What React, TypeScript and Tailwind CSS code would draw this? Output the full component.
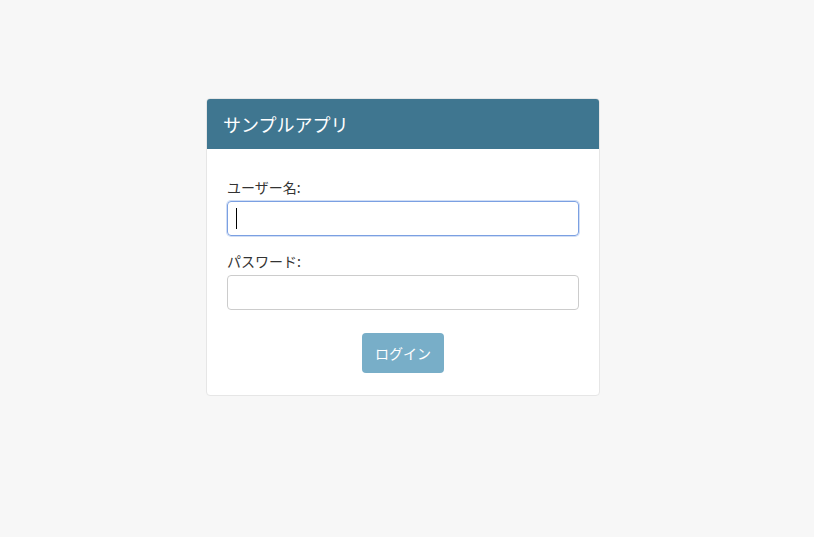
import React from 'react'

const font = { fontFamily: '"Noto Sans CJK JP", "Noto Sans", sans-serif' }

export default function App() {
  return (
    <div className="min-h-[537px] bg-[#f7f7f7] pt-[98px] pl-[206px]" style={font}>
      <div className="w-[394px] rounded-[4px] border border-[#e6e6e6] bg-white overflow-hidden">
        {/* Header */}
        <div className="h-[50px] bg-[#3f7690] px-4 flex items-center">
          <h1 className="text-[18px] text-white leading-none">サンプルアプリ</h1>
        </div>

        {/* Form */}
        <div className="px-5 pt-[28px] pb-[22px]">
          <label className="block text-[14px] leading-[20px] text-[#333] mb-1">ユーザー名:</label>
          <div className="relative">
            <input
              type="text"
              className="block w-full h-[35px] rounded-[4px] border border-[#7ba0e2] px-3 text-[14px] outline-none shadow-[0_0_0_1px_rgba(123,160,226,0.35)]"
            />
            {/* text caret */}
            <span className="absolute left-[9px] top-[7px] h-[21px] w-px bg-black" />
          </div>

          <label className="block mt-[15px] text-[14px] leading-[20px] text-[#333] mb-1">パスワード:</label>
          <input
            type="password"
            className="block w-full h-[35px] rounded-[4px] border border-[#cccccc] px-3 text-[14px] outline-none"
          />

          <div className="flex justify-center mt-[23px]">
            <button className="w-[82px] h-[40px] rounded-[4px] bg-[#78aec8] text-white text-[14px]">
              ログイン
            </button>
          </div>
        </div>
      </div>
    </div>
  )
}
